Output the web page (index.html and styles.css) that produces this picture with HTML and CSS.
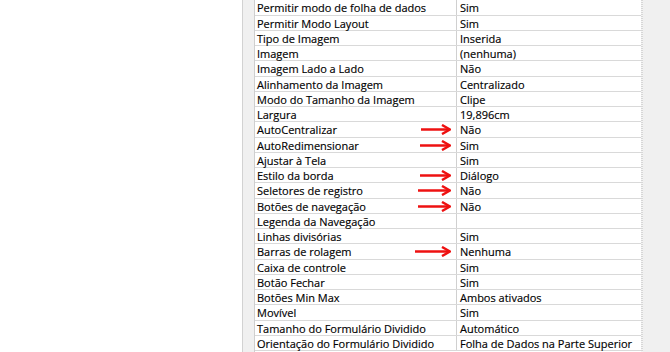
FILE: index.html
```html
<!DOCTYPE html>
<html>
<head>
<meta charset="utf-8">
<link rel="stylesheet" href="styles.css">
</head>
<body>
<div class="page">
  <div class="blank"></div>
  <div class="pane">
    <div class="sheet">
      <div class="row"><div class="key">Permitir modo de folha de dados</div><div class="val">Sim</div></div>
      <div class="row"><div class="key">Permitir Modo Layout</div><div class="val">Sim</div></div>
      <div class="row"><div class="key">Tipo de Imagem</div><div class="val">Inserida</div></div>
      <div class="row"><div class="key">Imagem</div><div class="val">(nenhuma)</div></div>
      <div class="row"><div class="key">Imagem Lado a Lado</div><div class="val">Não</div></div>
      <div class="row"><div class="key">Alinhamento da Imagem</div><div class="val">Centralizado</div></div>
      <div class="row"><div class="key">Modo do Tamanho da Imagem</div><div class="val">Clipe</div></div>
      <div class="row"><div class="key">Largura</div><div class="val">19,896cm</div></div>
      <div class="row"><div class="key">AutoCentralizar<svg class="arrow a30" viewBox="0 0 30 11"><line x1="0" y1="5.5" x2="28" y2="5.5"/><polyline points="21,1 29,5.5 21,10"/></svg></div><div class="val">Não</div></div>
      <div class="row"><div class="key">AutoRedimensionar<svg class="arrow a31" viewBox="0 0 31 11"><line x1="0" y1="5.5" x2="29" y2="5.5"/><polyline points="22,1 30,5.5 22,10"/></svg></div><div class="val">Sim</div></div>
      <div class="row"><div class="key">Ajustar à Tela</div><div class="val">Sim</div></div>
      <div class="row"><div class="key">Estilo da borda<svg class="arrow a31" viewBox="0 0 31 11"><line x1="0" y1="5.5" x2="29" y2="5.5"/><polyline points="22,1 30,5.5 22,10"/></svg></div><div class="val">Diálogo</div></div>
      <div class="row"><div class="key">Seletores de registro<svg class="arrow a33" viewBox="0 0 33 11"><line x1="0" y1="5.5" x2="31" y2="5.5"/><polyline points="24,1 32,5.5 24,10"/></svg></div><div class="val">Não</div></div>
      <div class="row"><div class="key">Botões de navegação<svg class="arrow a33" viewBox="0 0 33 11"><line x1="0" y1="5.5" x2="31" y2="5.5"/><polyline points="24,1 32,5.5 24,10"/></svg></div><div class="val">Não</div></div>
      <div class="row"><div class="key">Legenda da Navegação</div><div class="val"></div></div>
      <div class="row"><div class="key">Linhas divisórias</div><div class="val">Sim</div></div>
      <div class="row"><div class="key">Barras de rolagem<svg class="arrow a36" viewBox="0 0 36 11"><line x1="0" y1="5.5" x2="34" y2="5.5"/><polyline points="27,1 35,5.5 27,10"/></svg></div><div class="val">Nenhuma</div></div>
      <div class="row"><div class="key">Caixa de controle</div><div class="val">Sim</div></div>
      <div class="row"><div class="key">Botão Fechar</div><div class="val">Sim</div></div>
      <div class="row"><div class="key">Botões Min Max</div><div class="val">Ambos ativados</div></div>
      <div class="row"><div class="key">Movível</div><div class="val">Sim</div></div>
      <div class="row"><div class="key">Tamanho do Formulário Dividido</div><div class="val">Automático</div></div>
      <div class="row"><div class="key">Orientação do Formulário Dividido</div><div class="val">Folha de Dados na Parte Superior</div></div>
    </div>
    <div class="edge"></div>
  </div>
  <div class="blank-right"></div>
</div>
</body>
</html>
```

FILE: styles.css
```css
html, body {
  margin: 0;
  padding: 0;
  background: #ffffff;
  overflow: hidden;
}
.page {
  display: flex;
  width: 670px;
  height: 352px;
  font-family: "Open Sans", "Noto Sans", sans-serif;
  font-size: 11px;
  color: #000;
  -webkit-text-stroke: 0.15px #000;
}
.blank {
  width: 242px;
  flex: none;
}
.pane {
  flex: none;
  width: 416px;
  display: flex;
  background: #f0f0f0;
  border-left: 1px solid #d2d2d2;
  border-right: 1px solid #a6a6a6;
  padding-left: 11px;
}
.sheet {
  width: 386px;
  flex: none;
  padding-top: 0.45px;
  border-left: 1px solid #cfcfcf;
  background: #fff;
}
.edge {
  width: 2px;
  flex: none;
  background-image: linear-gradient(#d6d6d6 50%, #f4f4f4 50%);
  background-size: 2px 2px;
}
.row {
  display: flex;
  height: 15.25px;
  box-sizing: border-box;
  border-bottom: 1px solid #d9d9d9;
}
.key {
  position: relative;
  width: 202px;
  flex: none;
  box-sizing: border-box;
  padding-left: 2px;
  border-right: 1px solid #d0d0d0;
  line-height: 15px;
  white-space: nowrap;
}
.val {
  flex: 1;
  padding-left: 3px;
  line-height: 15px;
  white-space: nowrap;
}
.arrow {
  position: absolute;
  right: 5px;
  top: 2px;
  height: 11px;
  fill: none;
  stroke: #ee1111;
  stroke-width: 2.5;
}
.arrow.a30 { width: 30px; }
.arrow.a31 { width: 31px; }
.arrow.a33 { width: 33px; }
.arrow.a36 { width: 36px; }
.blank-right {
  flex: 1;
}
```
